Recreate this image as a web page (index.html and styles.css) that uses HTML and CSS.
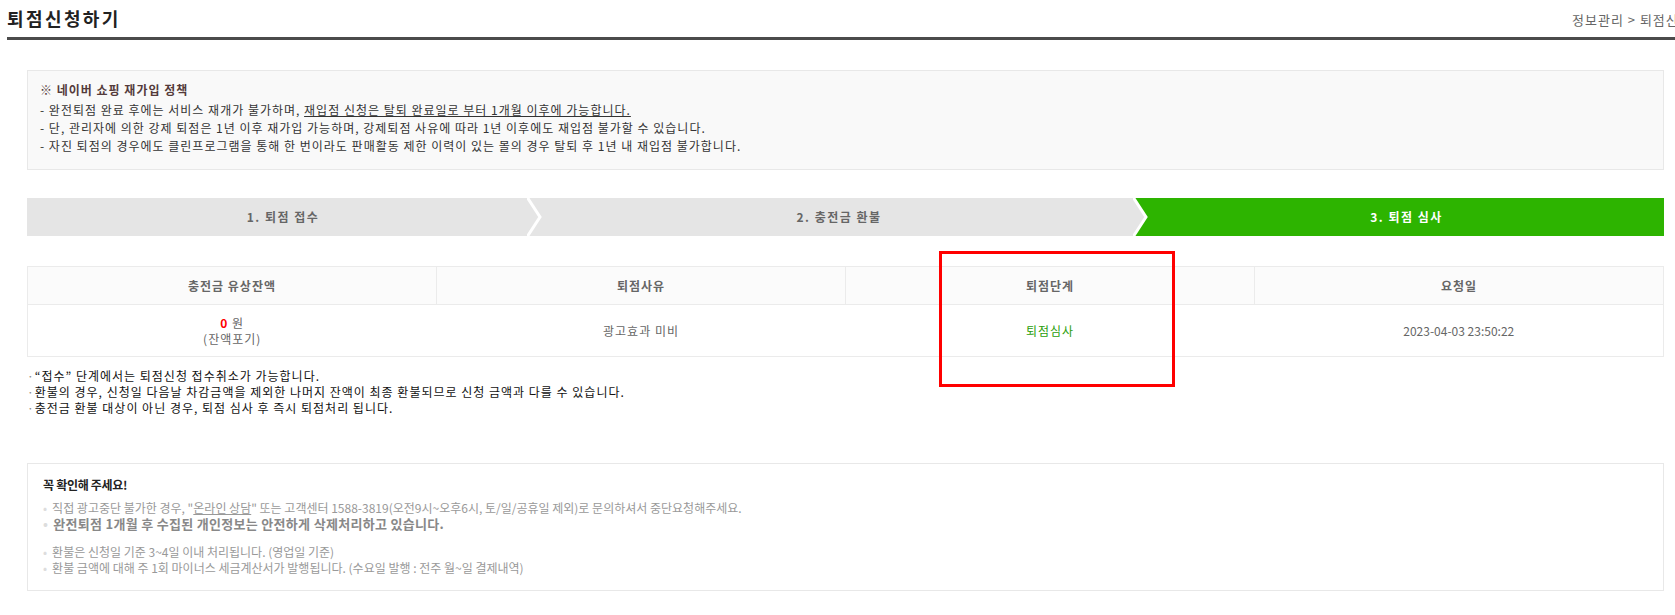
FILE: index.html
```html
<!DOCTYPE html>
<html>

<head>
  <link rel="stylesheet" href="styles.css">
</head>

<body>
  <!-- page title -->
  <div class="page-head">
    <div class="page-title">퇴점신청하기</div>
    <div class="location">정보관리 &gt; 퇴점신청하기</div>
  </div>

  <div class="content">
    <!-- policy box -->
    <div class="policy">
      <div class="policy-title">※ 네이버 쇼핑 재가입 정책</div>
      <p>- 완전퇴점 완료 후에는 서비스 재개가 불가하며, <u>재입점 신청은 탈퇴 완료일로 부터 1개월 이후에 가능합니다.</u></p>
      <p>- 단, 관리자에 의한 강제 퇴점은 1년 이후 재가입 가능하며, 강제퇴점 사유에 따라 1년 이후에도 재입점 불가할 수 있습니다.</p>
      <p>- 자진 퇴점의 경우에도 클린프로그램을 통해 한 번이라도 판매활동 제한 이력이 있는 몰의 경우 탈퇴 후 1년 내 재입점 불가합니다.</p>
    </div>

    <!-- steps -->
    <div class="steps">
      <div class="step first">
        1. 퇴점 접수
        <svg class="tip" width="16" height="38" viewBox="0 0 16 38">
          <polygon points="0,0 13,19 0,38" fill="#e5e5e5"/>
          <polyline points="0,-1 13,19 0,39" fill="none" stroke="#fff" stroke-width="3"/>
        </svg>
      </div>
      <div class="step">
        2. 충전금 환불
        <svg class="tip" width="16" height="38" viewBox="0 0 16 38">
          <polygon points="0,0 13,19 0,38" fill="#e5e5e5"/>
          <polyline points="0,-1 13,19 0,39" fill="none" stroke="#fff" stroke-width="3"/>
        </svg>
      </div>
      <div class="step on">3. 퇴점 심사</div>
    </div>

    <!-- result table -->
    <div class="table-wrap">
      <table class="result">
        <tr>
          <th>충전금 유상잔액</th>
          <th>퇴점사유</th>
          <th>퇴점단계</th>
          <th>요청일</th>
        </tr>
        <tr>
          <td><b class="zero">0</b> 원<br>(잔액포기)</td>
          <td>광고효과 미비</td>
          <td class="green">퇴점심사</td>
          <td class="date">2023-04-03 23:50:22</td>
        </tr>
      </table>
      <div class="mark"></div>
    </div>

    <ul class="notes">
      <li>“접수” 단계에서는 퇴점신청 접수취소가 가능합니다.</li>
      <li>환불의 경우, 신청일 다음날 차감금액을 제외한 나머지 잔액이 최종 환불되므로 신청 금액과 다를 수 있습니다.</li>
      <li>충전금 환불 대상이 아닌 경우, 퇴점 심사 후 즉시 퇴점처리 됩니다.</li>
    </ul>

    <!-- check box -->
    <div class="check">
      <div class="check-title">꼭 확인해 주세요!</div>
      <ul>
        <li>직접 광고중단 불가한 경우, "<u>온라인 상담</u>" 또는 고객센터 1588-3819(오전9시~오후6시, 토/일/공휴일 제외)로 문의하셔서 중단요청해주세요.</li>
        <li class="bold">완전퇴점 1개월 후 수집된 개인정보는 안전하게 삭제처리하고 있습니다.</li>
      </ul>
      <ul class="gap">
        <li>환불은 신청일 기준 3~4일 이내 처리됩니다. (영업일 기준)</li>
        <li>환불 금액에 대해 주 1회 마이너스 세금계산서가 발행됩니다. (수요일 발행 : 전주 월~일 결제내역)</li>
      </ul>
    </div>
  </div>
</body>

</html>
```

FILE: styles.css
```css
body {
  margin: 0;
  overflow: hidden;
  font-family: "Noto Sans CJK KR", "Noto Sans", sans-serif;
  font-size: 12px;
  letter-spacing: 1px;
  color: #333;
}

.page-head {
  display: flex;
  justify-content: space-between;
  align-items: flex-end;
  margin-left: 7px;
  height: 37px;
  border-bottom: 3px solid #4b4b4b;
}

.page-title {
  font-size: 18px;
  font-weight: bold;
  color: #222;
  line-height: 22px;
  padding-bottom: 8px;
  letter-spacing: 2.4px;
}

.location {
  flex: 0 0 103px;
  min-width: 0;
  color: #666;
  font-size: 13px;
  letter-spacing: 1px;
  line-height: 16px;
  padding-bottom: 9px;
  white-space: nowrap;
}

.content {
  padding: 30px 11px 0 27px;
}

.policy {
  background-color: #f9f9f9;
  border: 1px solid #e8e8e8;
  padding: 10px 13px 14px 12px;
  line-height: 18px;
}

.policy-title {
  font-weight: bold;
  color: #543b3b;
  margin-bottom: 2px;
}

.policy p {
  margin: 0;
  color: #333;
}

.steps {
  display: grid;
  grid-template-columns: 502px 606px 1fr;
  height: 38px;
  margin-top: 28px;
}

.step {
  position: relative;
  background-color: #e5e5e5;
  color: #666;
  font-weight: bold;
  letter-spacing: 1.5px;
  line-height: 38px;
  text-align: center;
  padding-left: 14px;
}

.step.first {
  padding-left: 10px;
  z-index: 2;
}

.step.on {
  background-color: #2db400;
  color: #fff;
}

/* chevron between steps */
.tip {
  position: absolute;
  top: 0;
  right: -14px;
  z-index: 1;
}

.table-wrap {
  position: relative;
  margin-top: 30px;
}

.result {
  width: 100%;
  border-collapse: collapse;
  table-layout: fixed;
  border: 1px solid #ebebeb;
}

.result th {
  height: 37px;
  background-color: #fbfbfb;
  border-bottom: 1px solid #ebebeb;
  border-left: 1px solid #ebebeb;
  color: #666;
  font-weight: bold;
  padding: 0;
}

.result th:first-child {
  border-left: none;
}

.result td {
  height: 51px;
  text-align: center;
  color: #666;
  line-height: 16px;
  padding: 0;
}

.result td.green {
  color: #2a9e0a;
}

.result td.date {
  letter-spacing: 0;
}

.zero {
  color: #f00;
}

.mark {
  position: absolute;
  top: -15px;
  left: 912px;
  width: 230px;
  height: 130px;
  border: 3px solid #f00;
}

.notes {
  list-style: none;
  margin: 11px 0 0;
  padding: 0;
  color: #111;
  letter-spacing: 1px;
  line-height: 16px;
}

.notes li::before {
  content: "·";
  letter-spacing: 0;
  margin-right: 1px;
  color: #888;
}

.check {
  margin-top: 47px;
  border: 1px solid #e8e8e8;
  padding: 13px 15px 14px;
  letter-spacing: 0;
}

.check-title {
  font-weight: bold;
  color: #222;
  line-height: 16px;
  letter-spacing: -0.3px;
  margin-bottom: 7px;
}

.check ul {
  list-style: none;
  margin: 0;
  padding: 0;
  color: #999;
  line-height: 16px;
}

.check ul.gap {
  margin-top: 12px;
}

.check li::before {
  content: "•";
  color: #ddd;
  margin-right: 5px;
}

.check li.bold {
  font-size: 13px;
  font-weight: bold;
  color: #888;
  letter-spacing: 0.3px;
}
```
